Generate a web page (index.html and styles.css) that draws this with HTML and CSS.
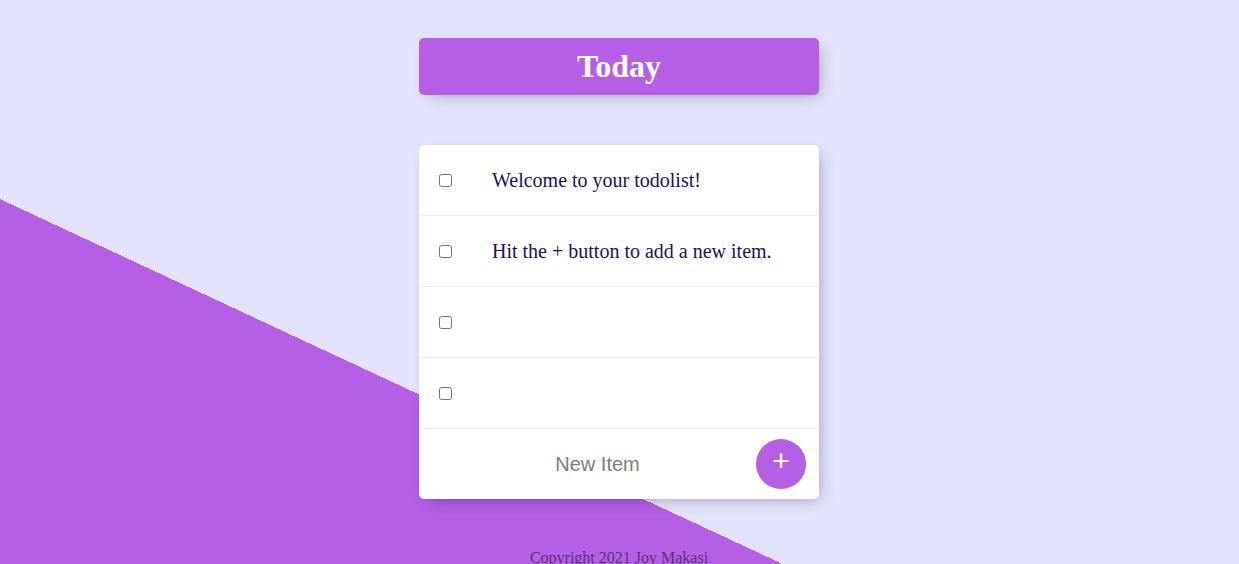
FILE: index.html
```html
<!DOCTYPE html>
<html lang="en">
<head>
<meta charset="utf-8">
<title>Todo List</title>
<link rel="stylesheet" href="styles.css">
</head>
<body>
  <main class="page">
    <div class="box heading">
      <h1 class="title">Today</h1>
    </div>
    <div class="box list">
      <div class="item">
        <input class="check" type="checkbox">
        <p class="text">Welcome to your todolist!</p>
      </div>
      <div class="item">
        <input class="check" type="checkbox">
        <p class="text">Hit the + button to add a new item.</p>
      </div>
      <div class="item">
        <input class="check" type="checkbox">
        <p class="text"></p>
      </div>
      <div class="item">
        <input class="check" type="checkbox">
        <p class="text"></p>
      </div>
      <form class="item new-form">
        <input class="new-input" type="text" name="newItem" placeholder="New Item" autocomplete="off">
        <button class="add-btn" type="button">+</button>
      </form>
    </div>
    <footer class="footer">Copyright 2021 Joy Makasi</footer>
  </main>
</body>
</html>
```
FILE: styles.css
```css
html {
  background-color: #e4e3fd;
  background-image: linear-gradient(25deg, #b45fe5 50%, #e4e3fd 50%);
  min-height: 976px;
  font-family: "Liberation Serif", "Times New Roman", serif;
}

body {
  margin: 0;
}

.page {
  display: flex;
  flex-direction: column;
  align-items: center;
  padding-top: 38px;
  padding-right: 1px;
}

.box {
  width: 400px;
  background: #ffffff;
  border-radius: 5px;
  box-shadow: 5px 5px 15px -5px rgba(0, 0, 0, 0.3);
}

.heading {
  background-color: #b45fe5;
  text-align: center;
  margin-bottom: 50px;
}

.title {
  margin: 0;
  padding: 10px;
  color: #ffffff;
  font-size: 32px;
  font-weight: bold;
  line-height: 37px;
}

.list {
  margin-bottom: 50px;
}

.item {
  min-height: 70px;
  display: flex;
  align-items: center;
  border-bottom: 1px solid #f1f1f1;
}

.item:last-child {
  border-bottom: 0;
}

.check {
  margin: 20px;
  width: 13px;
  height: 13px;
  flex: none;
}

.text {
  margin: 0;
  padding: 20px;
  font-size: 20px;
  color: #1c1259;
}

.new-form {
  margin-left: 20px;
  height: 70px;
}

.new-input {
  width: 317px;
  height: 60px;
  box-sizing: border-box;
  padding: 0;
  border: none;
  outline: none;
  text-align: center;
  font-family: "Liberation Sans", Arial, sans-serif;
  font-size: 20px;
  background: transparent;
}

.new-input::placeholder {
  color: #857a78;
  opacity: 1;
}

.add-btn {
  width: 50px;
  height: 50px;
  border-radius: 50%;
  border: 0;
  background-color: #b45fe5;
  color: #ffffff;
  font-family: "Liberation Sans", Arial, sans-serif;
  font-size: 30px;
  padding: 0 0 6px 0;
  display: flex;
  align-items: center;
  justify-content: center;
  flex: none;
}

.footer {
  color: rgba(0, 0, 0, 0.5);
  text-align: center;
  font-size: 16px;
}
```
